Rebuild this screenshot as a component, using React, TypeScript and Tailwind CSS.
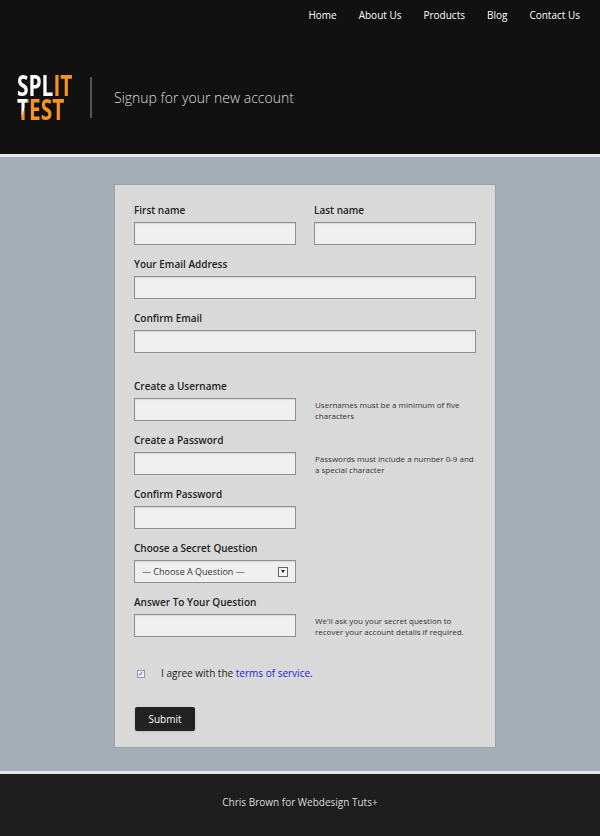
export default function App() {
  const f = { fontFamily: '"Open Sans", sans-serif' };
  const inp = "block shrink-0 h-[23px] bg-[#efefef] border border-[#8f8f8f] shadow-[inset_0_1px_1px_rgba(0,0,0,0.1)]";
  const lab = "block text-[10px] font-semibold text-[#222] mb-[5px] leading-[13px]";
  const hint = "text-[8px] leading-[11px] text-[#333] ml-[19px] w-[165px]";
  return (
    <div style={f} className="w-[600px] h-[836px] flex flex-col bg-[#a5adb7]">
      <header className="bg-[#111] h-[154px] relative">
        <nav className="flex justify-end gap-[22px] pr-[20px] pt-[8px] text-[10px] text-white">
          <span>Home</span><span>About Us</span><span>Products</span><span>Blog</span><span>Contact Us</span>
        </nav>
        <div className="flex items-center mt-[50px] pl-[17px]">
          <div className="font-bold text-[29px] leading-[24px] w-[48px] origin-left scale-x-[0.72] whitespace-nowrap" style={{ fontFamily: '"Open Sans", sans-serif' }}>
            <div><span className="text-white">SPL</span><span className="text-[#f7931e]">IT</span></div>
            <div><span className="text-transparent bg-clip-text bg-[linear-gradient(115deg,#fff_55%,#f7931e_55%)]">T</span><span className="text-[#f7931e]">EST</span></div>
          </div>
          <div className="w-[2px] h-[41px] bg-[#555] ml-[25px]"></div>
          <div className="text-[#ddd] text-[14px] ml-[22px] font-light">Signup for your new account</div>
        </div>
      </header>
      <div className="h-[3px] bg-[#e8e8e8]"></div>
      <main className="flex-1 flex justify-center pt-[27px] pl-[10px]">
        <div className="w-[382px] h-[564px] bg-[#d9d9d9] border border-[#9aa1a9] px-[19px] pt-[19px]">
          <div className="flex gap-[18px]">
            <div><label className={lab}>First name</label><div className={inp + " w-[162px]"} /></div>
            <div><label className={lab}>Last name</label><div className={inp + " w-[162px]"} /></div>
          </div>
          <div className="mt-[13px]"><label className={lab}>Your Email Address</label><div className={inp + " w-[342px]"} /></div>
          <div className="mt-[13px]"><label className={lab}>Confirm Email</label><div className={inp + " w-[342px]"} /></div>
          <div className="mt-[27px]"><label className={lab}>Create a Username</label>
            <div className="flex items-center"><div className={inp + " w-[162px]"} /><div className={hint}>Usernames must be a minimum of five characters</div></div></div>
          <div className="mt-[13px]"><label className={lab}>Create a Password</label>
            <div className="flex items-center"><div className={inp + " w-[162px]"} /><div className={hint}>Passwords must include a number 0-9 and a special character</div></div></div>
          <div className="mt-[13px]"><label className={lab}>Confirm Password</label><div className={inp + " w-[162px]"} /></div>
          <div className="mt-[13px]"><label className={lab}>Choose a Secret Question</label>
            <div className={inp + " w-[162px] flex items-center justify-between px-[7px] text-[9px] text-[#333]"}>
              <span>— Choose A Question —</span>
              <span className="w-[10px] h-[10px] border border-[#666] bg-[#f4f4f4] flex items-center justify-center"><span className="w-0 h-0 border-l-[2px] border-r-[2px] border-t-[3px] border-l-transparent border-r-transparent border-t-[#222]"></span></span>
            </div></div>
          <div className="mt-[13px]"><label className={lab}>Answer To Your Question</label>
            <div className="flex items-center"><div className={inp + " w-[162px]"} /><div className={hint}>We'll ask you your secret question to recover your account details if required.</div></div></div>
          <div className="mt-[29px] flex items-center text-[10px] text-[#222]">
            <span className="ml-[3px] w-[8px] h-[8px] border border-[#8a9ab0] bg-[#eef] text-[#2a5ab0] text-[7px] leading-[6px] flex items-center justify-center">✓</span>
            <span className="ml-[16px]">I agree with the <span className="text-[#2222dd]">terms of service</span>.</span>
          </div>
          <button className="mt-[26px] ml-[1px] w-[60px] h-[24px] bg-[#222] rounded-[2px] text-white text-[10px] shadow">Submit</button>
        </div>
      </main>
      <div className="h-[3px] bg-[#e8e8e8] mt-[20px]"></div>
      <footer className="h-[62px] bg-[#1e1e1e] text-[#ddd] text-[10px] flex items-start justify-center pt-[21px]">Chris Brown for Webdesign Tuts+</footer>
    </div>
  );
}
